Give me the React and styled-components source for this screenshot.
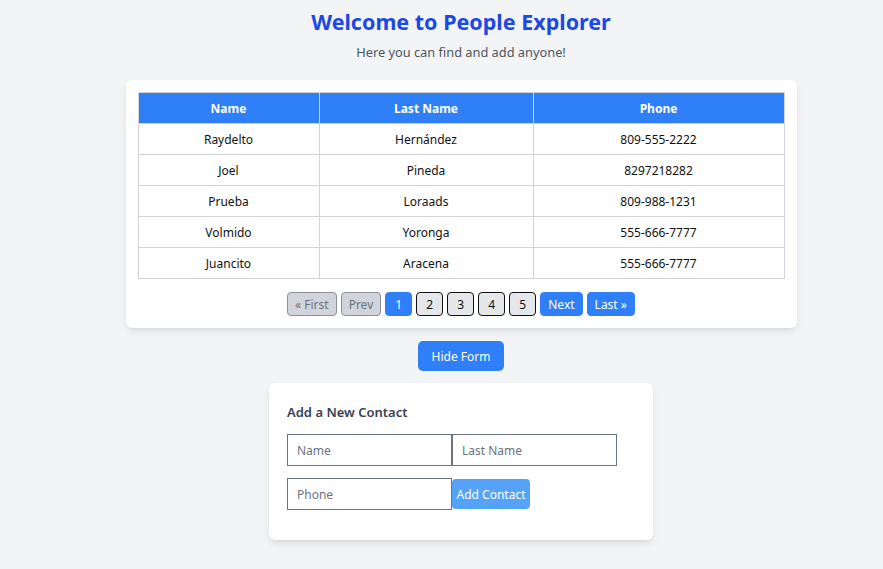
import React from 'react';
import styled, { createGlobalStyle } from 'styled-components';

const people = [
  { name: 'Raydelto', lastName: 'Hernández', phone: '809-555-2222' },
  { name: 'Joel', lastName: 'Pineda', phone: '8297218282' },
  { name: 'Prueba', lastName: 'Loraads', phone: '809-988-1231' },
  { name: 'Volmido', lastName: 'Yoronga', phone: '555-666-7777' },
  { name: 'Juancito', lastName: 'Aracena', phone: '555-666-7777' },
];

const App = () => {
  return (
    <Page>
      <GlobalStyle />
      <Title>Welcome to People Explorer</Title>
      <Subtitle>Here you can find and add anyone!</Subtitle>

      <TableCard>
        <Table>
          <colgroup>
            <col style={{ width: 181 }} />
            <col style={{ width: 214 }} />
            <col />
          </colgroup>
          <thead>
            <tr>
              <Th>Name</Th>
              <Th>Last Name</Th>
              <Th>Phone</Th>
            </tr>
          </thead>
          <tbody>
            {people.map((p, i) => (
              <tr key={i}>
                <Td>{p.name}</Td>
                <Td>{p.lastName}</Td>
                <Td>{p.phone}</Td>
              </tr>
            ))}
          </tbody>
        </Table>

        <Pagination>
          <PageButton variant='disabled'>« First</PageButton>
          <PageButton variant='disabled'>Prev</PageButton>
          <PageButton variant='active'>1</PageButton>
          <PageButton>2</PageButton>
          <PageButton>3</PageButton>
          <PageButton>4</PageButton>
          <PageButton>5</PageButton>
          <PageButton variant='active'>Next</PageButton>
          <PageButton variant='active'>Last »</PageButton>
        </Pagination>
      </TableCard>

      <ToggleButton>Hide Form</ToggleButton>

      <FormCard>
        <FormTitle>Add a New Contact</FormTitle>
        <Fields>
          <Input placeholder='Name' />
          <Input placeholder='Last Name' />
          <Input placeholder='Phone' />
          <SubmitButton>Add Contact</SubmitButton>
        </Fields>
      </FormCard>
    </Page>
  );
};

const GlobalStyle = createGlobalStyle`
  body {
    margin: 0;
    background: #f3f4f6;
    font-family: 'Noto Sans', 'Segoe UI', sans-serif;
  }
`;

const Page = styled.div`
  display: flex;
  flex-direction: column;
  align-items: center;
  padding: 6px 0 0 39px;
  min-height: 569px;
  box-sizing: border-box;
`;

const Title = styled.h1`
  margin: 0;
  font-size: 21.5px;
  line-height: 32px;
  font-weight: 700;
  color: #1c48e4;
`;

const Subtitle = styled.p`
  margin: 4px 0 0;
  font-size: 12.8px;
  line-height: 20px;
  color: #4b5563;
`;

const TableCard = styled.div`
  margin-top: 18px;
  width: 671px;
  box-sizing: border-box;
  padding: 12px;
  background: white;
  border-radius: 6px;
  box-shadow: 0 4px 8px -2px rgba(0, 0, 0, 0.12), 0 2px 4px -2px rgba(0, 0, 0, 0.06);
`;

const Table = styled.table`
  width: 100%;
  border-collapse: collapse;
  table-layout: fixed;
  font-size: 12px;
`;

const Th = styled.th`
  height: 30px;
  padding: 0;
  background: #2e7ff8;
  color: white;
  font-weight: 700;
  border: 1px solid #d1d5db;
`;

const Td = styled.td`
  height: 30px;
  padding: 0;
  text-align: center;
  color: #111;
  border: 1px solid #d1d5db;
`;

const Pagination = styled.div`
  display: flex;
  justify-content: center;
  gap: 4px;
  margin-top: 13px;
`;

const PageButton = styled.button`
  height: 24px;
  min-width: 27px;
  padding: 0 7px;
  box-sizing: border-box;
  border-radius: 4px;
  font-family: inherit;
  font-size: 12px;
  border: 1px solid
    ${({ variant }) =>
      variant === 'active' ? '#2e7ff8' : variant === 'disabled' ? '#8b919b' : '#111'};
  background: ${({ variant }) =>
    variant === 'active' ? '#2e7ff8' : variant === 'disabled' ? '#d1d5db' : '#e5e7eb'};
  color: ${({ variant }) =>
    variant === 'active' ? 'white' : variant === 'disabled' ? '#6b7280' : '#111'};
`;

const ToggleButton = styled.button`
  margin-top: 13px;
  width: 86px;
  height: 30px;
  border: none;
  border-radius: 5px;
  background: #2e7ff8;
  color: white;
  font-family: inherit;
  font-size: 12px;
`;

const FormCard = styled.div`
  margin-top: 12px;
  width: 384px;
  box-sizing: border-box;
  padding: 18px 18px 30px;
  background: white;
  border-radius: 6px;
  box-shadow: 0 4px 8px -2px rgba(0, 0, 0, 0.12), 0 2px 4px -2px rgba(0, 0, 0, 0.06);
`;

const FormTitle = styled.h2`
  margin: 1px 0 12px;
  font-size: 13px;
  line-height: 20px;
  font-weight: 600;
  color: #374151;
`;

const Fields = styled.div`
  display: flex;
  flex-wrap: wrap;
  align-items: center;
  row-gap: 12px;
`;

const Input = styled.input`
  width: 165px;
  height: 32px;
  box-sizing: border-box;
  padding: 0 9px;
  border: 1px solid #6b7280;
  font-family: inherit;
  font-size: 12px;
  outline: none;

  &::placeholder {
    color: #6b7280;
  }
`;

const SubmitButton = styled.button`
  height: 30px;
  width: 78px;
  padding: 0;
  border: none;
  border-radius: 4px;
  background: #54a2f9;
  color: white;
  font-family: inherit;
  font-size: 12px;
`;

export default App;
